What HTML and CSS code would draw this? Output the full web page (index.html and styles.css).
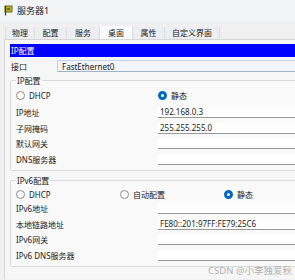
FILE: index.html
```html
<!DOCTYPE html>
<html lang="zh">
<head>
<meta charset="utf-8">
<link rel="stylesheet" href="styles.css">
</head>
<body>
<div class="window">
  <div class="title">
    <svg class="icon" width="10" height="11" viewBox="0 0 10 11">
      <rect x="1" y="1" width="7" height="6" fill="#d9a520" stroke="#4a7a1e" stroke-width="1"/>
      <rect x="3" y="3" width="3" height="2" fill="#2f8f2f"/>
      <line x1="1.5" y1="1" x2="1.5" y2="10.5" stroke="#3a3a3a" stroke-width="1.2"/>
    </svg>
    <span>服务器1</span>
  </div>
  <div class="tabs">
    <div class="tab t1">物理</div>
    <div class="tab t2">配置</div>
    <div class="tab t3">服务</div>
    <div class="tab t4 active">桌面</div>
    <div class="tab t5">属性</div>
    <div class="tab t6">自定义界面</div>
  </div>
  <div class="panel">
    <div class="bar">IP配置</div>
    <div class="iface">
      <span class="iface-label">接口</span>
      <div class="iface-input">FastEthernet0</div>
    </div>
    <fieldset class="group g1">
      <legend>IP配置</legend>
      <div class="radios">
        <label class="radio r-a"><span class="dot"></span>DHCP</label>
        <label class="radio"><span class="dot on"></span>静态</label>
      </div>
      <div class="row"><span class="lbl">IP地址</span><div class="field">192.168.0.3</div></div>
      <div class="row"><span class="lbl">子网掩码</span><div class="field">255.255.255.0</div></div>
      <div class="row"><span class="lbl">默认网关</span><div class="field"></div></div>
      <div class="row"><span class="lbl">DNS服务器</span><div class="field"></div></div>
    </fieldset>
    <fieldset class="group g2">
      <legend>IPv6配置</legend>
      <div class="radios">
        <label class="radio r6a"><span class="dot"></span>DHCP</label>
        <label class="radio r6b"><span class="dot"></span>自动配置</label>
        <label class="radio"><span class="dot on"></span>静态</label>
      </div>
      <div class="row"><span class="lbl">IPv6地址</span><div class="field"></div></div>
      <div class="row"><span class="lbl">本地链路地址</span><div class="field">FE80::201:97FF:FE79:25C6</div></div>
      <div class="row"><span class="lbl">IPv6网关</span><div class="field"></div></div>
      <div class="row"><span class="lbl">IPv6 DNS服务器</span><div class="field"></div></div>
    </fieldset>
  </div>
  <div class="watermark">CSDN @小李独爱秋</div>
</div>
</body>
</html>
```

FILE: styles.css
```css
html, body {
  margin: 0;
  padding: 0;
}
body {
  width: 295px;
  height: 280px;
  overflow: hidden;
  background: #f0f0f0;
  font-family: "Noto Sans", "Noto Sans CJK SC", sans-serif;
  color: #1a1a1a;
}
.window {
  position: relative;
  width: 295px;
  height: 280px;
  overflow: hidden;
}
.title {
  height: 21px;
  display: flex;
  align-items: center;
  padding-left: 4px;
  background: #f3f4f6;
  font-size: 9px;
  color: #222;
}
.title .icon {
  margin-right: 3px;
}
.tabs {
  display: flex;
  margin-top: 5px;
  padding-left: 5px;
  height: 13px;
  align-items: flex-end;
}
.tab {
  height: 12px;
  line-height: 12px;
  font-size: 8px;
  text-align: center;
  box-sizing: border-box;
  background: #eceef1;
  border-right: 1px solid #dcdde0;
  color: #222;
}
.tab.t1 { width: 30px; border-left: 1px solid #dcdde0; }
.tab.t2 { width: 32px; }
.tab.t3 { width: 33px; }
.tab.t4 { width: 33px; }
.tab.t5 { width: 32px; }
.tab.t6 { width: 55px; }
.tab.active {
  background: #f9fafb;
  height: 13px;
  line-height: 13px;
}
.panel {
  margin-left: 4px;
  border-left: 1px solid #d6d6d6;
  border-top: 1px solid #d6d6d6;
  background: #f6f6f6;
  padding: 4px 0 0 5px;
  height: 240px;
  box-sizing: border-box;
  overflow: hidden;
}
.bar {
  background: #0000ff;
  color: #ffffff;
  font-size: 8px;
  height: 13px;
  line-height: 13px;
  padding-left: 1px;
}
.iface {
  display: flex;
  align-items: center;
  margin-top: 3px;
  height: 12px;
}
.iface-label {
  width: 46px;
  font-size: 8px;
  padding-left: 1px;
}
.iface-input {
  flex: 1;
  height: 12px;
  line-height: 11px;
  box-sizing: border-box;
  background: #f1f5f9;
  border: 1px solid #c9d3df;
  border-right: none;
  border-bottom-color: #9fb3c8;
  padding-left: 4px;
  font-size: 8px;
  border-radius: 1px 0 0 1px;
}
.group {
  margin: 4px -10px 0 0;
  padding: 0 0 0 5px;
  border: 1px solid #dadada;
  border-radius: 2px;
  background: #f9f9f9;
  min-width: 0;
}
.group legend {
  font-size: 8px;
  padding: 0 1px;
  margin-left: 0;
  line-height: 9px;
  color: #222;
}
.radios {
  display: flex;
  align-items: center;
  height: 14px;
  margin-top: 3px;
  margin-bottom: 5px;
  font-size: 8px;
}
.g2 .radios {
  margin-top: 2px;
  margin-bottom: 2px;
}
.radio {
  display: flex;
  align-items: center;
}
.r-a { width: 142px; }
.r6a { width: 104px; }
.r6b { width: 104px; }
.dot {
  width: 9px;
  height: 9px;
  box-sizing: border-box;
  border: 1px solid #8a8a8a;
  border-radius: 50%;
  background: #fff;
  margin-right: 4px;
}
.dot.on {
  border: 3px solid #0067c0;
}
.row {
  display: flex;
  align-items: center;
  height: 11px;
  margin-bottom: 4.5px;
  font-size: 8px;
}
.lbl {
  width: 142px;
}
.field {
  flex: 1;
  height: 11px;
  box-sizing: border-box;
  background: #ffffff;
  border-bottom: 1px solid #9a9a9a;
  font-size: 8px;
  line-height: 10px;
  padding-left: 2px;
  color: #222;
}
.g1 {
  height: 95px;
  box-sizing: border-box;
}
.g2 {
  margin-top: 5px;
  height: 91px;
  box-sizing: border-box;
}
.watermark {
  position: absolute;
  right: 3px;
  bottom: 3px;
  font-size: 9.5px;
  color: rgba(150, 150, 150, 0.75);
}
```
